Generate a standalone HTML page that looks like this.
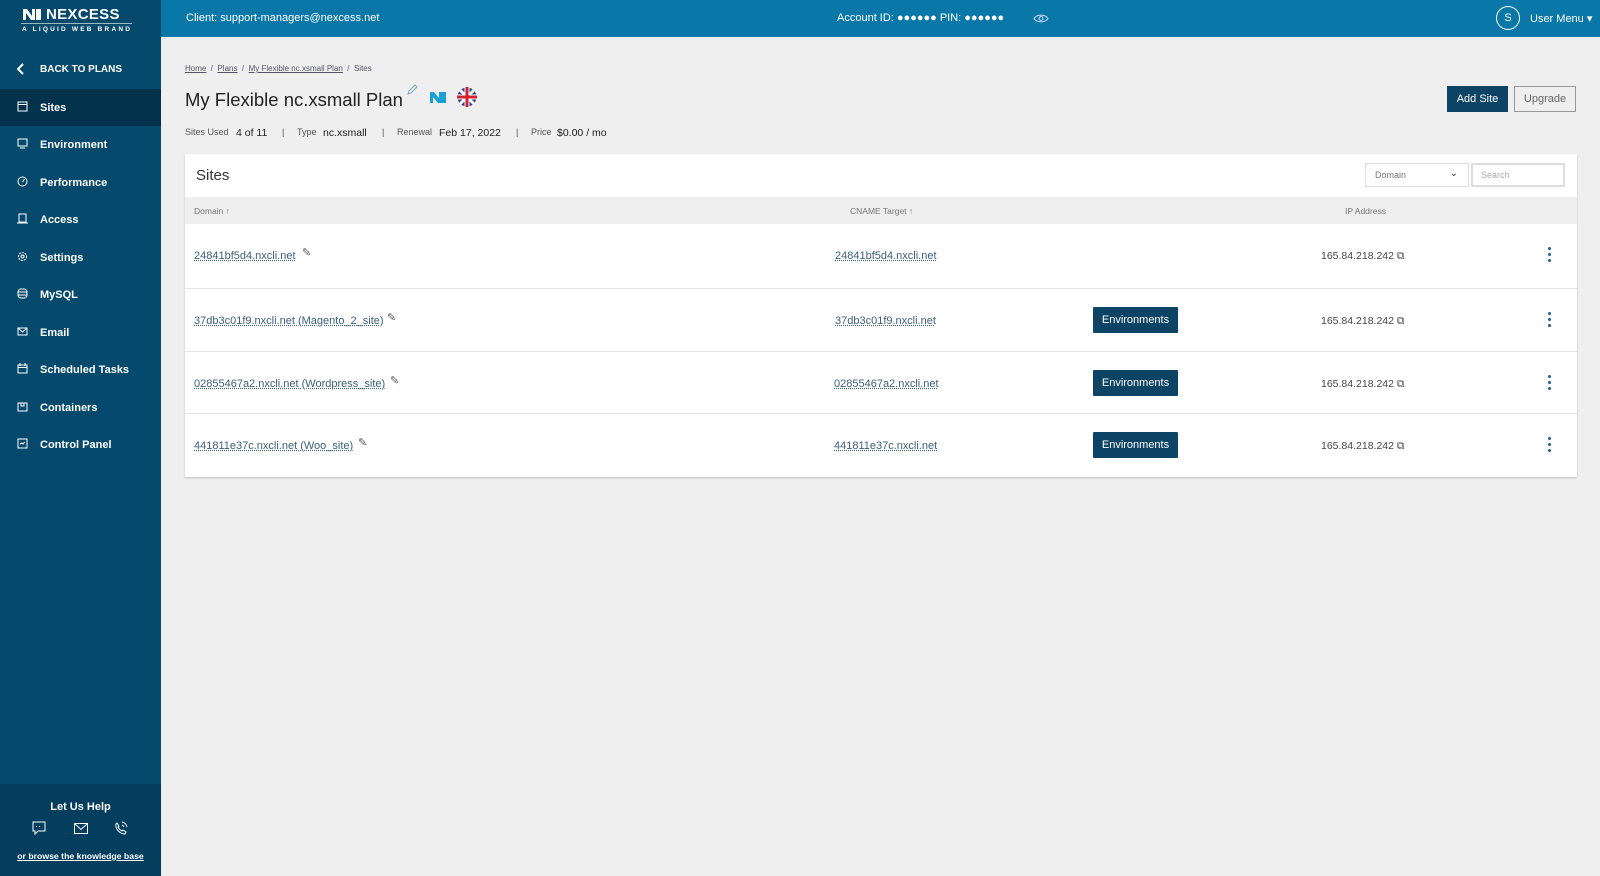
<!DOCTYPE html>
<html><head><meta charset="utf-8"><style>
*{box-sizing:border-box;margin:0;padding:0}
body{width:1600px;height:876px;overflow:hidden;background:#efefef;font-family:"Liberation Sans",sans-serif;position:relative;color:#222}
.abs{position:absolute}
#side{left:0;top:0;width:161px;height:876px;background:#054a6d}
#help{left:0;top:784px;width:161px;height:92px;background:#033e5e;color:#fff;text-align:center}
.nav{position:absolute;left:0;width:161px;height:37px;color:#fff;font-size:11px;font-weight:bold;display:flex;align-items:center;padding-left:40px}
.nav svg{position:absolute;left:17px;top:12px}
#top{left:161px;top:0;width:1439px;height:37px;background:#0978a9;color:#fff;font-size:11px}
.card{left:185px;top:154px;width:1392px;height:323px;background:#fff;box-shadow:0 1px 2px rgba(0,0,0,.2)}
.row{position:absolute;left:0;width:1392px;border-top:1px solid #e6e6e6;height:63px}
.lnk{position:absolute;font-size:11px;color:#3b5f7d;text-decoration:underline dotted;top:26px}
.env{position:absolute;left:908px;top:18px;width:85px;height:26px;background:#0d4466;color:#fff;font-size:11px;display:flex;align-items:center;justify-content:center;border-radius:1px}
.ip{position:absolute;left:1136px;top:26px;font-size:10.5px;color:#444}
.dots{position:absolute;left:1363px;top:23px;width:4px}
.dots i{display:block;width:3px;height:3px;border-radius:50%;background:#1d5f86;margin-bottom:3px}
.m{position:absolute;top:127px;font-size:9px;color:#555}
.m b{color:#222;font-size:10.5px;font-weight:normal}
</style></head><body>
<div id="side" class="abs">
 <svg class="abs" style="left:22px;top:8px" width="20" height="13" viewBox="0 0 20 13"><path d="M1 1h4l5 7V1h3v11H9L4 5v7H1z M14 1h5v11h-5z" fill="#fff"/></svg>
 <div class="abs" style="left:46px;top:6px;color:#fff;font-weight:bold;font-size:15px;letter-spacing:0.3px">NEXCESS</div>
 <div class="abs" style="left:21px;top:23px;width:111px;height:1px;background:#9bb"></div>
 <div class="abs" style="left:22px;top:26px;color:#fff;font-size:6.5px;font-weight:bold;letter-spacing:2.2px">A LIQUID WEB BRAND</div>
 <div class="nav" style="top:51px;font-size:10px">BACK TO PLANS<svg width="8" height="12" viewBox="0 0 8 12"><path d="M6 1L1 6l5 5" stroke="#fff" stroke-width="2" fill="none"/></svg></div>
 <div class="nav" style="top:89px;background:#03324d">Sites<svg width="11" height="11"><rect x="1" y="1" width="9" height="9" stroke="#fff" fill="none"/><path d="M1 3.5h9" stroke="#fff"/></svg></div>
 <div class="nav" style="top:126px">Environment<svg width="11" height="11"><rect x="1" y="1" width="9" height="7" stroke="#fff" fill="none"/><path d="M3 10h5" stroke="#fff"/></svg></div>
 <div class="nav" style="top:164px">Performance<svg width="11" height="11"><circle cx="5.5" cy="5.5" r="4.5" stroke="#fff" fill="none"/><path d="M5.5 6l2-3" stroke="#fff"/></svg></div>
 <div class="nav" style="top:201px">Access<svg width="11" height="11"><rect x="2" y="1" width="7" height="8" stroke="#fff" fill="none"/><path d="M0 10h11" stroke="#fff"/></svg></div>
 <div class="nav" style="top:239px">Settings<svg width="11" height="11"><circle cx="5.5" cy="5.5" r="4" stroke="#fff" stroke-dasharray="2 1" fill="none"/><circle cx="5.5" cy="5.5" r="1.5" stroke="#fff" fill="none"/></svg></div>
 <div class="nav" style="top:276px">MySQL<svg width="11" height="11"><rect x="1" y="1" width="9" height="9" rx="3" stroke="#fff" fill="none"/><path d="M1 4h9M1 7h9" stroke="#fff"/></svg></div>
 <div class="nav" style="top:314px">Email<svg width="11" height="11"><rect x="1" y="2" width="9" height="7" stroke="#fff" fill="none"/><path d="M1 2l4.5 4 4.5-4" stroke="#fff" fill="none"/></svg></div>
 <div class="nav" style="top:351px">Scheduled Tasks<svg width="11" height="11"><rect x="1" y="2" width="9" height="8" stroke="#fff" fill="none"/><path d="M1 4.5h9M3 0v3M8 0v3" stroke="#fff"/></svg></div>
 <div class="nav" style="top:389px">Containers<svg width="11" height="11"><rect x="1" y="2" width="9" height="8" stroke="#fff" fill="none"/><path d="M4 2v3h3V2" stroke="#fff" fill="none"/></svg></div>
 <div class="nav" style="top:426px">Control Panel<svg width="11" height="11"><rect x="1" y="1" width="9" height="9" stroke="#fff" fill="none"/><path d="M3 6l2-1 1 1 2-2" stroke="#fff" fill="none"/></svg></div>
</div>
<div id="help" class="abs">
 <div style="margin-top:17px;font-size:11px;font-weight:bold">Let Us Help</div>
 <svg class="abs" style="left:32px;top:37px" width="14" height="14"><path d="M1 1h12v9H6l-3 3v-3H1z" stroke="#fff" fill="none"/><path d="M4 5.5h1M7 5.5h1M10 5.5h0" stroke="#fff"/></svg>
 <svg class="abs" style="left:74px;top:39px" width="14" height="11"><rect x="0.5" y="0.5" width="13" height="10" stroke="#fff" fill="none"/><path d="M.5 .5l6.5 6 6.5-6" stroke="#fff" fill="none"/></svg>
 <svg class="abs" style="left:114px;top:37px" width="14" height="14"><path d="M3 2l2 3-1 1c1 2 2 3 4 4l1-1 3 2-1 2C6 13 1 8 2 3z" stroke="#fff" fill="none"/><path d="M8 4a3 3 0 0 1 2 2M8 1a6 6 0 0 1 5 5" stroke="#fff" fill="none"/></svg>
 <div class="abs" style="left:0;width:161px;top:67px;font-size:8.7px;font-weight:bold;text-decoration:underline">or browse the knowledge base</div>
</div>
<div id="top" class="abs">
 <div class="abs" style="left:25px;top:12px">Client: support-managers@nexcess.net</div>
 <div class="abs" style="left:676px;top:12px">Account ID: ●●●●●● PIN: ●●●●●●</div>
 <svg class="abs" style="left:872px;top:13px" width="16" height="11"><path d="M1 5.5C4 1 12 1 15 5.5 12 10 4 10 1 5.5z" stroke="#cde" fill="none"/><circle cx="8" cy="5.5" r="2" stroke="#cde" fill="none"/></svg>
 <div class="abs" style="left:1335px;top:6px;width:24px;height:24px;border:1px solid #fff;border-radius:50%;text-align:center;line-height:22px;font-size:11px">S</div>
 <div class="abs" style="left:1369px;top:12px">User Menu ▾</div>
</div>
<div class="abs" style="left:185px;top:64px;font-size:8px;color:#556"><u>Home</u> &nbsp;/&nbsp; <u>Plans</u> &nbsp;/&nbsp; <u>My Flexible nc.xsmall Plan</u> &nbsp;/&nbsp; Sites</div>
<div class="abs" style="left:185px;top:89px;font-size:18.5px;color:#222">My Flexible nc.xsmall Plan</div>
<svg class="abs" style="left:406px;top:84px" width="12" height="12"><path d="M2 10l1-3 6-6 2 2-6 6z" stroke="#7ab" fill="none"/></svg>
<svg class="abs" style="left:429px;top:91px" width="18" height="13"><path d="M1 1h4l5 6V1h3v11H9L4 6v6H1z" fill="#1aa0d8"/><path d="M13 1h4v11h-4z" fill="#1aa0d8"/></svg>
<svg class="abs" style="left:457px;top:87px" width="20" height="20" viewBox="0 0 20 20"><circle cx="10" cy="10" r="9.5" fill="#2b3f8a"/><path d="M3 3l14 14M17 3L3 17" stroke="#fff" stroke-width="3"/><path d="M10 0v20M0 10h20" stroke="#fff" stroke-width="5"/><path d="M10 0v20M0 10h20" stroke="#d0202e" stroke-width="3"/></svg>
<div class="m" style="left:185px">Sites Used</div><div class="m" style="left:236px"><b>4 of 11</b></div>
<div class="m" style="left:282px">|</div>
<div class="m" style="left:297px">Type</div><div class="m" style="left:323px"><b>nc.xsmall</b></div>
<div class="m" style="left:382px">|</div>
<div class="m" style="left:397px">Renewal</div><div class="m" style="left:439px"><b>Feb 17, 2022</b></div>
<div class="m" style="left:516px">|</div>
<div class="m" style="left:531px">Price</div><div class="m" style="left:557px"><b>$0.00 / mo</b></div>
<div class="abs" style="left:1447px;top:86px;width:61px;height:26px;background:#0d4466;color:#fff;font-size:11px;display:flex;align-items:center;justify-content:center">Add Site</div>
<div class="abs" style="left:1514px;top:86px;width:62px;height:26px;border:1px solid #999;color:#666;font-size:11px;display:flex;align-items:center;justify-content:center">Upgrade</div>
<div class="card abs">
 <div class="abs" style="left:11px;top:13px;font-size:15px;color:#333">Sites</div>
 <div class="abs" style="left:1180px;top:9px;width:104px;height:24px;border:1px solid #ddd;font-size:9px;color:#777;padding:6px 9px">Domain<span style="position:absolute;right:10px;top:4px;font-size:10px;color:#333">⌄</span></div>
 <div class="abs" style="left:1286px;top:9px;width:94px;height:24px;border:2px solid #ddd;font-size:9px;color:#aaa;padding:5px 8px">Search</div>
 <div class="abs" style="left:0;top:43px;width:1392px;height:27px;background:#eeeeee;font-size:8.5px;color:#777">
  <span class="abs" style="left:9px;top:9px">Domain ↑</span>
  <span class="abs" style="left:665px;top:9px">CNAME Target ↑</span>
  <span class="abs" style="left:1160px;top:9px">IP Address</span>
 </div>
 <div class="row" style="top:70px;border-top:none">
  <span class="lnk" style="left:9px">24841bf5d4.nxcli.net</span><span class="abs" style="left:117px;top:22px;font-size:11px;color:#555">✎</span>
  <span class="lnk" style="left:650px">24841bf5d4.nxcli.net</span>
  <span class="ip">165.84.218.242 ⧉</span><div class="dots"><i></i><i></i><i></i></div>
 </div>
 <div class="row" style="top:134px">
  <span class="lnk" style="left:9px">37db3c01f9.nxcli.net (Magento_2_site)</span><span class="abs" style="left:202px;top:22px;font-size:11px;color:#555">✎</span>
  <span class="lnk" style="left:650px">37db3c01f9.nxcli.net</span>
  <div class="env">Environments</div>
  <span class="ip">165.84.218.242 ⧉</span><div class="dots"><i></i><i></i><i></i></div>
 </div>
 <div class="row" style="top:197px">
  <span class="lnk" style="left:9px">02855467a2.nxcli.net (Wordpress_site)</span><span class="abs" style="left:205px;top:22px;font-size:11px;color:#555">✎</span>
  <span class="lnk" style="left:649px">02855467a2.nxcli.net</span>
  <div class="env">Environments</div>
  <span class="ip">165.84.218.242 ⧉</span><div class="dots"><i></i><i></i><i></i></div>
 </div>
 <div class="row" style="top:259px">
  <span class="lnk" style="left:9px">441811e37c.nxcli.net (Woo_site)</span><span class="abs" style="left:173px;top:22px;font-size:11px;color:#555">✎</span>
  <span class="lnk" style="left:649px">441811e37c.nxcli.net</span>
  <div class="env">Environments</div>
  <span class="ip">165.84.218.242 ⧉</span><div class="dots"><i></i><i></i><i></i></div>
 </div>
</div>
</body></html>
